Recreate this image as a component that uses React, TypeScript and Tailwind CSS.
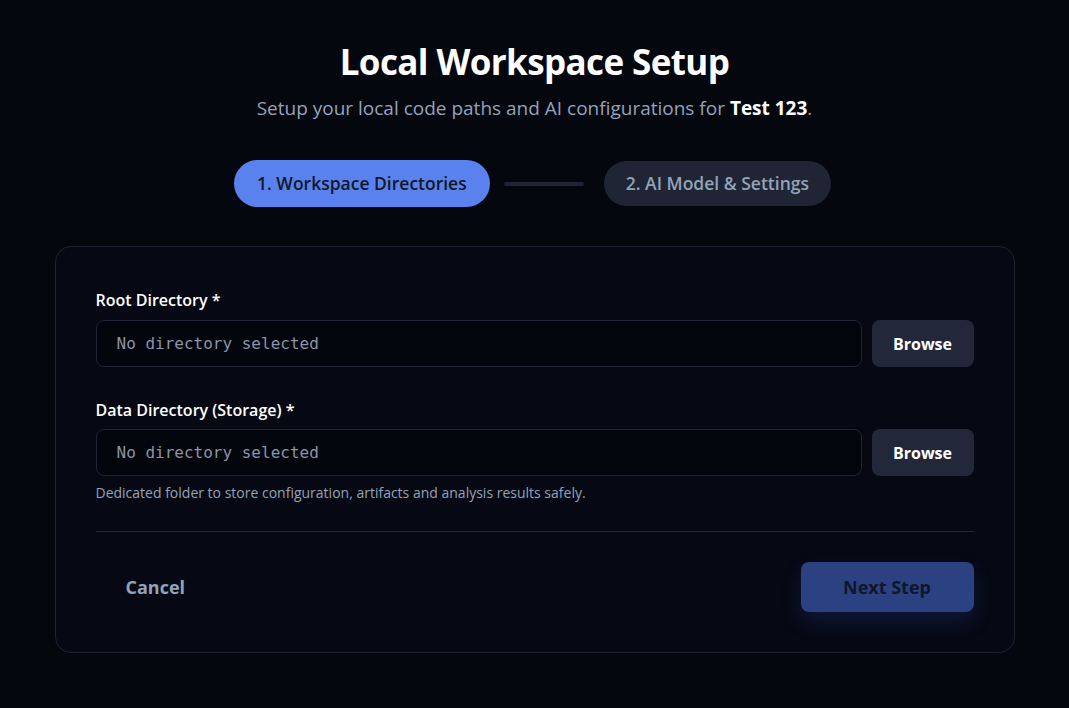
export default function App() {
	return (
		<div
			className="min-h-screen bg-[#05070f] text-white"
			style={{ fontFamily: '"Open Sans", "Noto Sans", sans-serif' }}
		>
			<div className="mx-auto w-[960px] pt-[38px]">
				{/* Header */}
				<div className="text-center">
					<h1 className="text-[35px] font-bold leading-[48px] tracking-[-0.6px] text-white">
						Local Workspace Setup
					</h1>
					<p className="mt-[8px] text-[19px] leading-[28px] text-[#94a3b8]">
						Setup your local code paths and AI configurations for{" "}
						<span className="font-bold text-white">Test 123</span>.
					</p>
				</div>

				{/* Stepper */}
				<div className="mt-[38px] flex items-center justify-center pr-[4px]">
					<div className="flex h-[47px] items-center rounded-full bg-[#5a82ee] px-[23px] text-[17.5px] font-semibold text-[#111827]">
						1. Workspace Directories
					</div>
					<div className="ml-[14px] mr-[20px] h-[4px] w-[80px] rounded-full bg-[#1e2433]" />
					<div className="flex h-[45px] items-center rounded-full bg-[#1f2535] px-[22px] text-[17.5px] font-semibold text-[#94a3b8]">
						2. AI Model &amp; Settings
					</div>
				</div>

				{/* Card */}
				<div className="mt-[39px] rounded-2xl border border-[#1d2333] bg-[#060914] px-[40px] pt-[41px] pb-[40px]">
					<div className="flex flex-col gap-[31px]">
						<div>
							<label className="mb-[8px] block text-[16px] font-semibold leading-[24px] text-white">
								Root Directory *
							</label>
							<div className="flex gap-[10px]">
								<div className="flex h-[47px] flex-1 items-center rounded-lg border border-[#1f2537] bg-[#03050c] px-[20px] text-[16px] text-[#8b95a7]" style={{ fontFamily: '"DejaVu Sans Mono", monospace' }}>
									No directory selected
								</div>
								<button className="h-[47px] w-[102px] rounded-lg bg-[#222839] text-[16px] font-bold text-white">
									Browse
								</button>
							</div>
						</div>
						<div>
							<label className="mb-[7px] block text-[16px] font-semibold leading-[24px] text-white">
								Data Directory (Storage) *
							</label>
							<div className="flex gap-[10px]">
								<div className="flex h-[47px] flex-1 items-center rounded-lg border border-[#1f2537] bg-[#03050c] px-[20px] text-[16px] text-[#8b95a7]" style={{ fontFamily: '"DejaVu Sans Mono", monospace' }}>
									No directory selected
								</div>
								<button className="h-[47px] w-[102px] rounded-lg bg-[#222839] text-[16px] font-bold text-white">
									Browse
								</button>
							</div>
							<p className="mt-[7px] text-[14px] leading-[20px] text-[#94a3b8]">
								Dedicated folder to store configuration, artifacts and analysis results safely.
							</p>
						</div>
					</div>

					{/* Footer */}
					<div className="mt-[28px] flex items-center justify-between border-t border-[#1f2537] pt-[30px]">
						<button className="h-[50px] px-[30px] text-[18px] font-bold text-[#94a3b8]">
							Cancel
						</button>
						<button className="h-[50px] w-[173px] rounded-lg bg-[#2c4182] text-[18px] font-bold text-[#0f172a] shadow-[0_10px_20px_rgba(59,91,219,0.18)]">
							Next Step
						</button>
					</div>
				</div>
			</div>
		</div>
	);
}
